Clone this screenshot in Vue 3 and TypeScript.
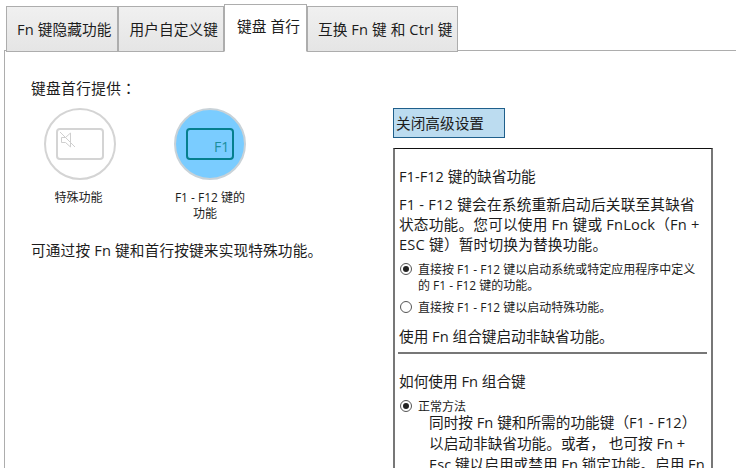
<script setup lang="ts">
const tabs = [
  { label: 'Fn 键隐藏功能', active: false },
  { label: '用户自定义键', active: false },
  { label: '键盘 首行', active: true },
  { label: '互换 Fn 键 和 Ctrl 键', active: false },
]
</script>

<template>
  <div class="page">
    <div class="tabs">
      <div v-for="t in tabs" :key="t.label" class="tab" :class="{ active: t.active }">{{ t.label }}</div>
    </div>
    <div class="panel">
      <div class="left">
        <div class="intro">键盘首行提供<span class="colon">：</span></div>
        <div class="modes">
          <div class="mode">
            <div class="circle">
              <svg width="48" height="32" viewBox="0 0 48 32">
                <rect x="1" y="1" width="46" height="30" rx="3" fill="none" stroke="#d4d4d4" stroke-width="2" />
                <path d="M5.500 9.500h4l5-4.500v14l-5-4.500h-4z" fill="none" stroke="#cfcfcf" stroke-width="1" />
                <path d="M4 4l15 15" stroke="#cfcfcf" stroke-width="1" />
              </svg>
            </div>
            <div class="cap">特殊功能</div>
          </div>
          <div class="mode on">
            <div class="circle">
              <svg width="48" height="32" viewBox="0 0 48 32">
                <rect x="1" y="1" width="46" height="30" rx="3" fill="none" stroke="#057f8e" stroke-width="2" />
                <text x="28" y="24" class="f1">F1</text>
              </svg>
            </div>
            <div class="cap"><span class="shift">F1 - F12 键的</span>功能</div>
          </div>
        </div>
        <div class="hint">可通过按 Fn 键和首行按键来实现特殊功能。</div>
      </div>
      <div class="right">
        <div class="adv">关闭高级设置</div>
        <div class="box">
          <div class="h">F1-F12 键的缺省功能</div>
          <div class="p first">F1 - F12 键会在系统重新启动后关联至其缺省状态功能。您可以使用 Fn 键或 FnLock（Fn + ESC 键）暂时切换为替换功能。</div>
          <label class="radio r1"><span class="dot sel"></span><span>直接按 F1 - F12 键以启动系统或特定应用程序中定义的 F1 - F12 键的功能。</span></label>
          <label class="radio r2"><span class="dot"></span><span>直接按 F1 - F12 键以启动特殊功能。</span></label>
          <div class="p use">使用 Fn 组合键启动非缺省功能。</div>
          <div class="rule"></div>
          <div class="h how">如何使用 Fn 组合键</div>
          <label class="radio r3"><span class="dot sel"></span><span>正常方法</span></label>
          <div class="p indent">同时按 Fn 键和所需的功能键（F1 - F12）以启动非缺省功能。或者， 也可按 Fn + Esc 键以启用或禁用 Fn 锁定功能。启用 Fn 锁定功能后</div>
        </div>
      </div>
    </div>
  </div>
</template>

<style>
html, body { margin: 0; background: #fff; overflow: hidden; }
</style>

<style scoped>
.page {
  width: 736px;
  height: 468px;
  overflow: hidden;
  font-family: "Open Sans", "Noto Sans CJK SC", sans-serif;
  font-size: 14.67px;
  color: #1c1c1c;
  display: flex;
  flex-direction: column;
  padding-top: 4px;
  box-sizing: border-box;
}
.tabs {
  display: flex;
  height: 47px;
  padding-left: 6px;
  position: relative;
  z-index: 1;
}
.tab {
  margin-top: 2px;
  height: 44px;
  border: 1px solid #adadad;
  background: linear-gradient(#f0f0f0, #e5e5e5);
  line-height: 44px;
  padding: 0 5px 0 10px;
  letter-spacing: .1px;
  white-space: nowrap;
}
.tab:first-child { padding-right: 6px; }
.tab:last-child { padding-right: 4px; }
.tab.active {
  margin-top: 0;
  height: 46px;
  background: #fff;
  border-bottom: 1px solid #fff;
  line-height: 42px;
  padding: 0 6px 0 12px;
}
.panel {
  flex: 1;
  margin-left: 4px;
  margin-top: -1px;
  border-top: 1px solid #adadad;
  border-left: 1px solid #adadad;
  display: flex;
  min-height: 0;
}
.left { width: 388px; padding: 27px 0 0 26px; box-sizing: border-box; }
.intro { line-height: 20px; letter-spacing: .4px; }
.colon { font-family: "Noto Sans CJK TC", sans-serif; }
.modes { display: flex; margin: 10px 0 0 -1px; }
.mode { width: 130px; display: flex; flex-direction: column; }
.circle {
  width: 68px;
  height: 68px;
  margin-left: 14px;
  border: 2px solid #d4d4d4;
  border-radius: 50%;
  display: flex;
  align-items: center;
  justify-content: center;
}
.on .circle { background: #7accff; border-color: #c8d2d8; }
.f1 { font-family: "Open Sans", sans-serif; font-size: 14px; font-weight: 500; fill: #1c8e9c; }
.cap { width: 97px; font-size: 12px; line-height: 16px; text-align: center; margin-top: 10px; }
.on .cap { width: 90px; }
.shift { display: block; padding-left: 10px; white-space: nowrap; }
.hint { line-height: 20px; margin-top: 18px; letter-spacing: .15px; }
.right { width: 320px; padding-top: 57px; box-sizing: border-box; }
.adv {
  width: 108px;
  height: 28px;
  border: 1px solid #1f5f8b;
  background: #bcdcf0;
  line-height: 28px;
  padding-left: 2px;
}
.box {
  margin-top: 10px;
  width: 320px;
  height: 400px;
  border: 2px solid #777;
  border-top: 1px solid #111;
  padding: 17px 4px 0 4px;
  box-sizing: border-box;
}
.h { line-height: 20px; }
.p { line-height: 20px; }
.first { margin-top: 8px; letter-spacing: .2px; }
.radio { display: flex; font-size: 12px; line-height: 16px; gap: 6px; padding-right: 4px; }
.r1 { margin-top: 8px; }
.r2 { margin-top: 6px; }
.r3 { margin-top: 8px; height: 13px; }
.use { margin-top: 10px; }
.dot {
  flex: none;
  width: 12px;
  height: 12px;
  margin: 1px 0 0 1px;
  border: 1px solid #555;
  border-radius: 50%;
  box-sizing: border-box;
  position: relative;
}
.dot.sel::after {
  content: "";
  position: absolute;
  left: 2px;
  top: 2px;
  width: 6px;
  height: 6px;
  border-radius: 50%;
  background: #222;
}
.rule { height: 2px; background: #777; margin: 6px 0 0 -1px; }
.how { margin-top: 17px; }
.indent { padding-left: 30px; line-height: 21px; }
</style>
